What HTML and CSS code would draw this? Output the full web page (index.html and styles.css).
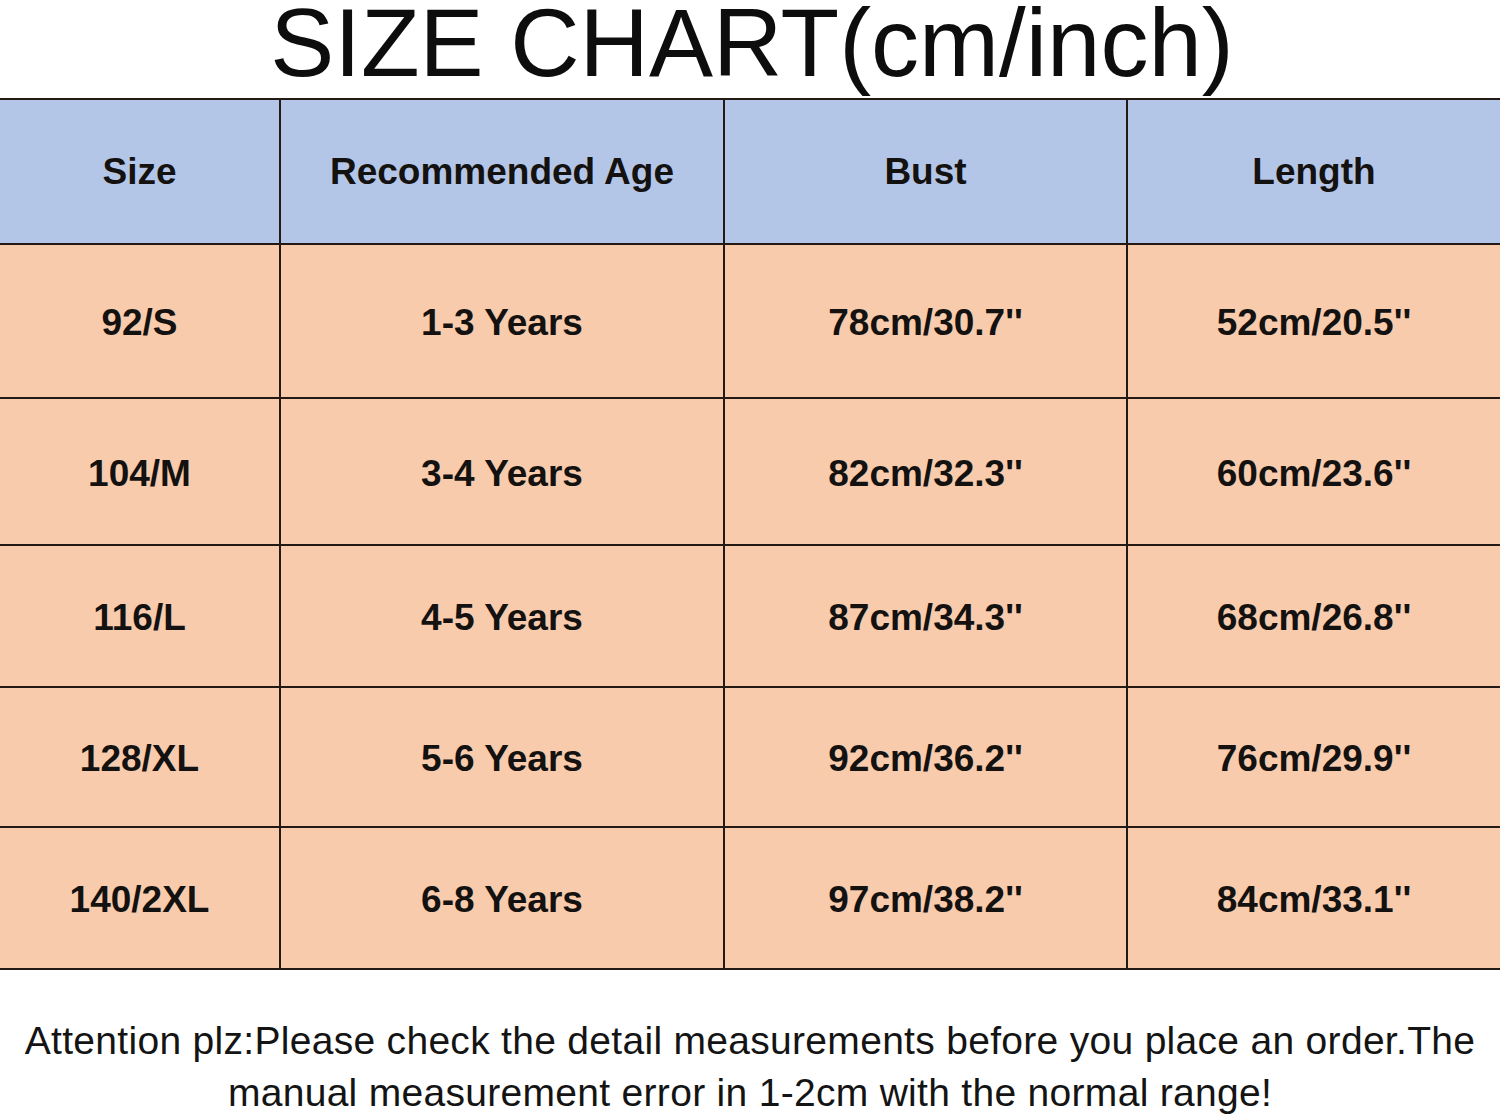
FILE: index.html
```html
<!DOCTYPE html>
<html>
<head>
<meta charset="utf-8">
<link rel="stylesheet" href="styles.css">
</head>
<body>
<div class="page">
  <h1 class="title">SIZE CHART(cm/inch)</h1>
  <div class="chart">
    <div class="cell head">Size</div>
    <div class="cell head">Recommended Age</div>
    <div class="cell head">Bust</div>
    <div class="cell head">Length</div>

    <div class="cell">92/S</div>
    <div class="cell">1-3 Years</div>
    <div class="cell">78cm/30.7''</div>
    <div class="cell">52cm/20.5''</div>

    <div class="cell">104/M</div>
    <div class="cell">3-4 Years</div>
    <div class="cell">82cm/32.3''</div>
    <div class="cell">60cm/23.6''</div>

    <div class="cell">116/L</div>
    <div class="cell">4-5 Years</div>
    <div class="cell">87cm/34.3''</div>
    <div class="cell">68cm/26.8''</div>

    <div class="cell">128/XL</div>
    <div class="cell">5-6 Years</div>
    <div class="cell">92cm/36.2''</div>
    <div class="cell">76cm/29.9''</div>

    <div class="cell">140/2XL</div>
    <div class="cell">6-8 Years</div>
    <div class="cell">97cm/38.2''</div>
    <div class="cell">84cm/33.1''</div>
  </div>
  <p class="note">Attention plz:Please check the detail measurements before you place an order.The<br>manual measurement error in 1-2cm with the normal range!</p>
</div>
</body>
</html>
```
FILE: styles.css
```css
html, body {
  margin: 0;
  padding: 0;
  background: #ffffff;
}
.page {
  width: 1500px;
  height: 1120px;
  overflow: hidden;
  font-family: "Liberation Sans", Arial, sans-serif;
  color: #111111;
}
.title {
  margin: 0;
  height: 98px;
  font-size: 96px;
  font-weight: normal;
  line-height: 86px;
  text-align: center;
  color: #0d0d0d;
  padding-left: 4px;
}
.chart {
  display: grid;
  grid-template-columns: 279px 442px 401px 1fr;
  grid-template-rows: 143px 152px 145px 140px 138px 140px;
  gap: 2px;
  padding: 2px 0;
  background: #231a16;
}
.cell {
  display: flex;
  align-items: center;
  justify-content: center;
  padding-top: 4px;
  background: #f8cbad;
  font-size: 37px;
  font-weight: bold;
  color: #141210;
}
.head {
  padding-top: 1px;
  background: #b4c6e7;
}
.note {
  margin: 45px 0 0;
  font-size: 39px;
  line-height: 52px;
  letter-spacing: 0.3px;
  text-align: center;
  color: #141414;
}
```
